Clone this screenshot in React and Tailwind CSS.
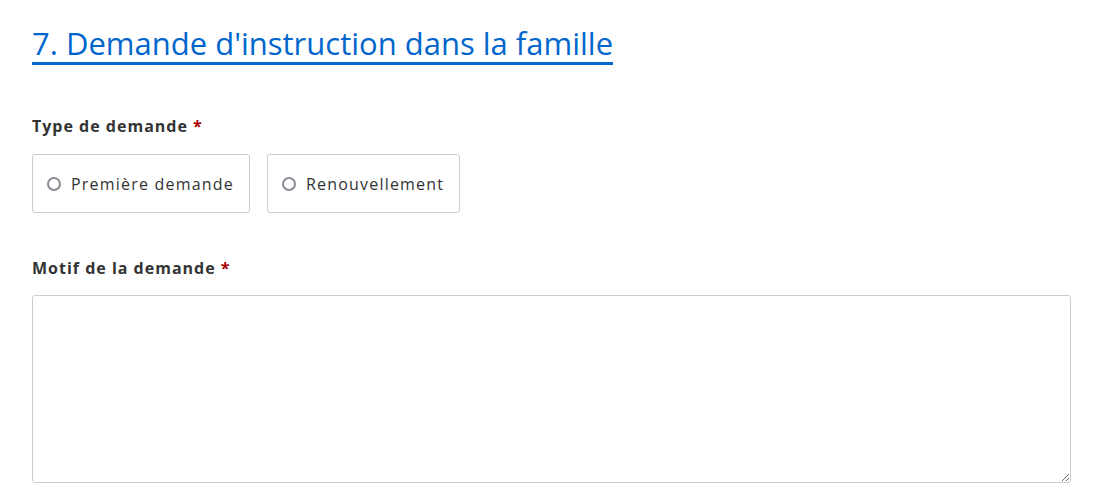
export default function App() {
  const font = { fontFamily: '"Open Sans", "Noto Sans", sans-serif' };
  return (
    <div className="bg-white w-[1102px] h-[503px] overflow-hidden text-[#333]" style={font}>
      <div className="pl-[32px] pr-[31px] pt-[25px]">
        <h2 className="inline-block text-[31px] leading-[36px] text-[#0066cc] border-b-[3px] border-[#0066cc] pb-[1px]">
          7. Demande d'instruction dans la famille
        </h2>
        <div className="mt-[51px] text-[16px] font-bold leading-[20px] tracking-[1px] text-[#333]">
          Type de demande <span className="text-[#a00]">*</span>
        </div>
        <div className="mt-[18px] flex gap-[17px]">
          {["Première demande", "Renouvellement"].map((t) => (
            <label key={t} className="flex items-center h-[59px] pl-[14px] pr-[15px] border border-[#ccc] rounded-[3px] text-[16px] tracking-[1.2px]">
              <span className="w-[14px] h-[14px] rounded-full border-2 border-[#8a8a94] mr-[10px]" />
              {t}
            </label>
          ))}
        </div>
        <div className="mt-[45px] text-[16px] font-bold leading-[20px] tracking-[1px]">
          Motif de la demande <span className="text-[#a00]">*</span>
        </div>
        <textarea className="mt-[17px] block w-full h-[188px] border border-[#ccc] rounded-[3px] resize-y" />
      </div>
    </div>
  );
}
